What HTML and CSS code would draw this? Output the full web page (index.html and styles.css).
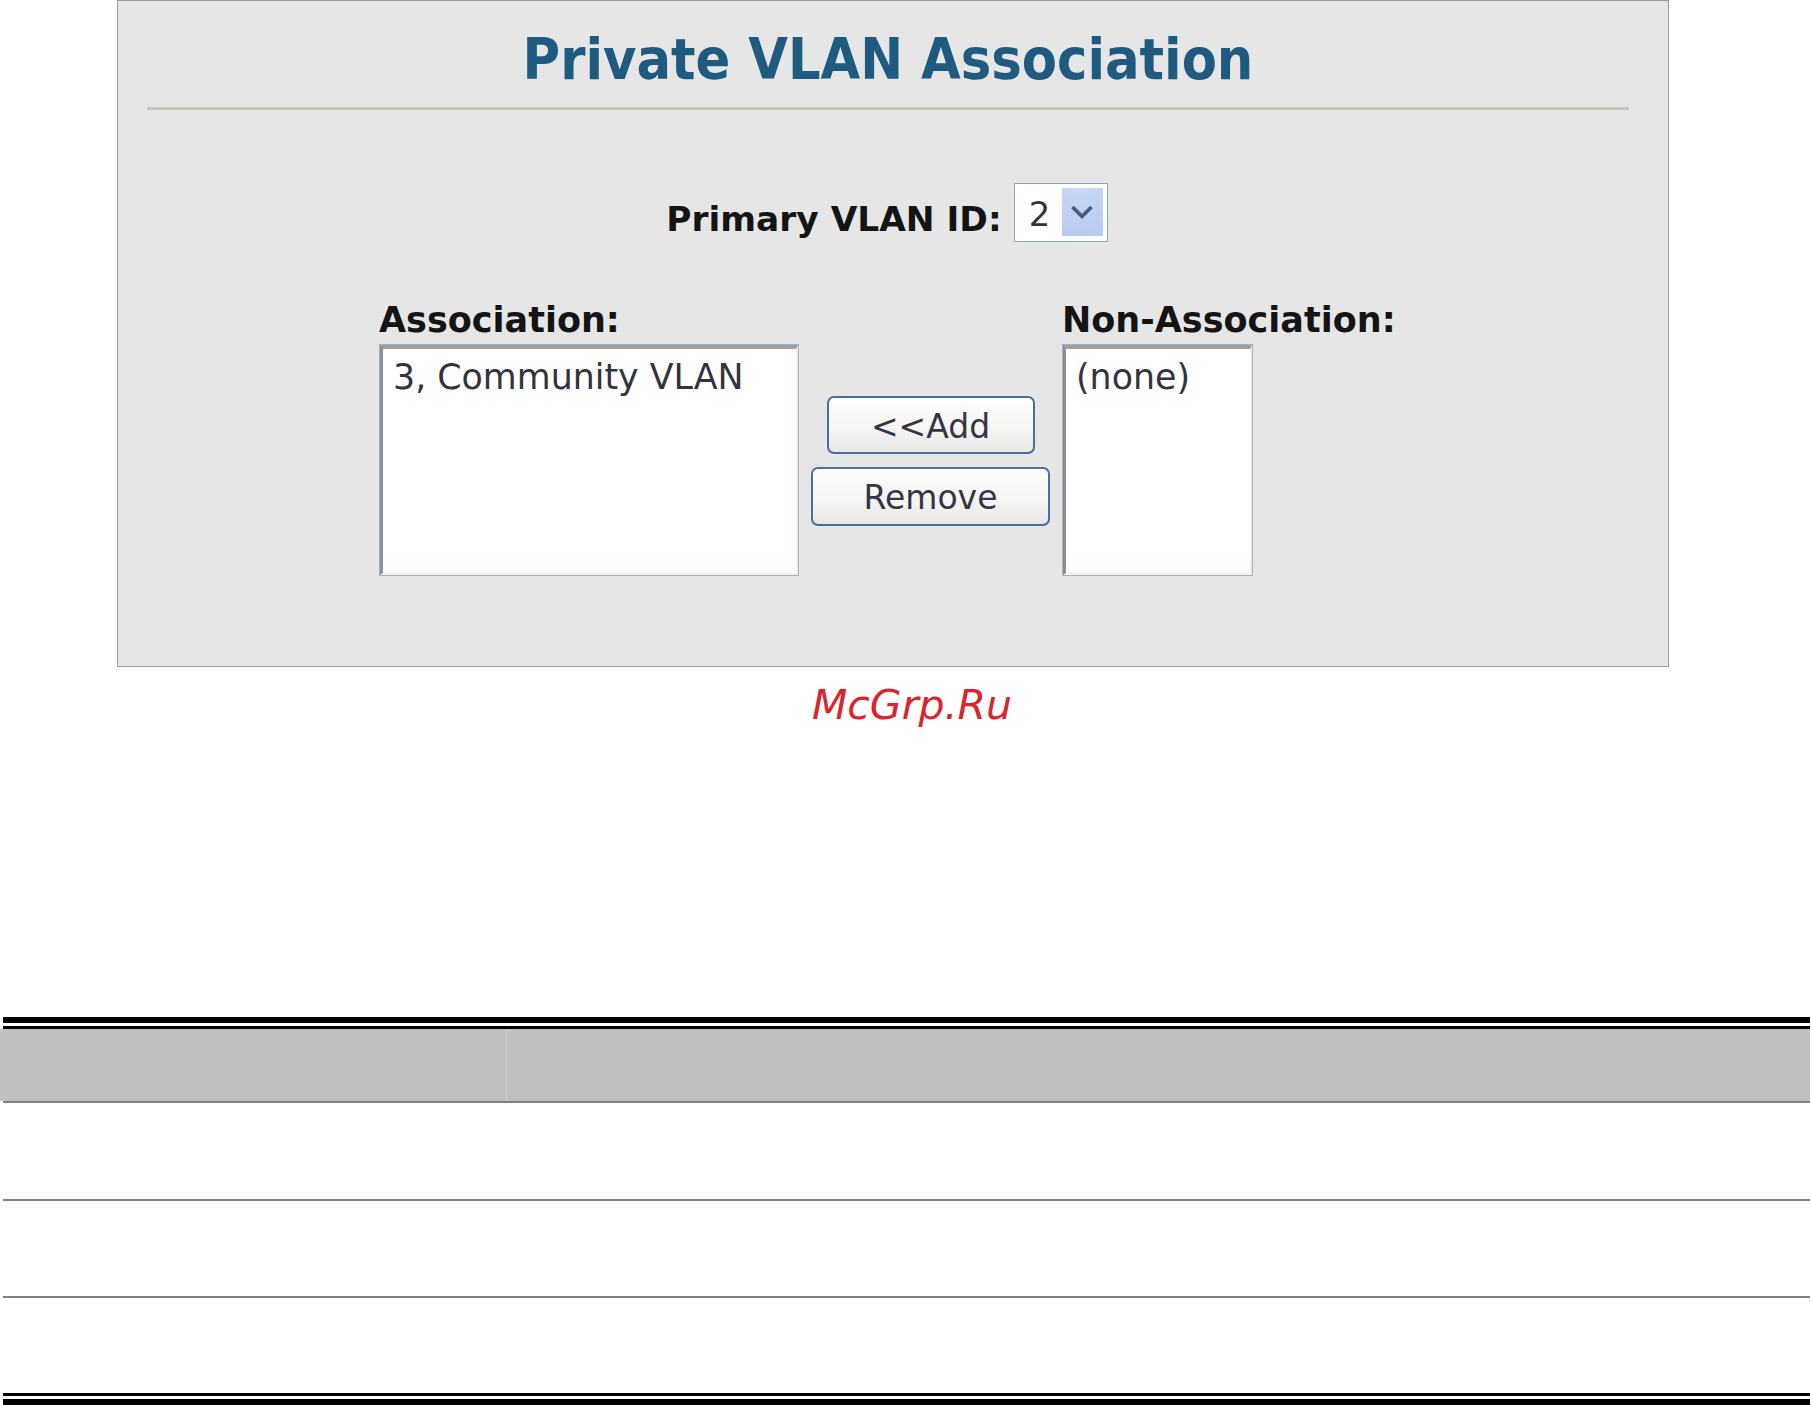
FILE: index.html
```html
<!DOCTYPE html>
<html>
<head>
<meta charset="utf-8">
<title>Private VLAN Association</title>
<link rel="stylesheet" href="styles.css">
</head>
<body>
<div class="panel">
  <h1 class="title">Private VLAN Association</h1>
  <div class="rule"></div>
  <div class="primary-row">
    <span class="label">Primary VLAN ID:</span>
    <div class="select">
      <span class="select-value">2</span>
      <span class="select-btn">
        <svg width="24" height="16" viewBox="0 0 24 16"><path d="M2.5 3 L12 12.5 L21.5 3" fill="none" stroke="#4a5a78" stroke-width="3.6"/></svg>
      </span>
    </div>
  </div>
  <div class="lists-row">
    <div class="col col-assoc">
      <div class="label">Association:</div>
      <div class="listbox"><div class="listbox-inner">3, Community VLAN</div></div>
    </div>
    <div class="btn-col">
      <div class="btn btn-add">&lt;&lt;Add</div>
      <div class="btn btn-remove">Remove</div>
    </div>
    <div class="col col-non">
      <div class="label">Non-Association:</div>
      <div class="listbox"><div class="listbox-inner">(none)</div></div>
    </div>
  </div>
</div>
<div class="watermark">McGrp.Ru</div>
<div class="table">
  <div class="thick-line"></div>
  <div class="thin-black"></div>
  <div class="thead">
    <div class="th th-first"></div>
    <div class="th th-second"></div>
  </div>
  <div class="row"></div>
  <div class="row"></div>
  <div class="row row-last"></div>
  <div class="thin-black bottom-thin"></div>
  <div class="thick-line bottom-thick"></div>
</div>
</body>
</html>
```

FILE: styles.css
```css
html, body {
  margin: 0;
  padding: 0;
  background: #ffffff;
}
body {
  font-family: "DejaVu Sans", Verdana, sans-serif;
  color: #333333;
  width: 1812px;
  height: 1405px;
  overflow: hidden;
}
.panel {
  box-sizing: border-box;
  margin-left: 117px;
  width: 1552px;
  height: 667px;
  background: #e6e6e6;
  border: 1px solid #9a9a9a;
  display: flex;
  flex-direction: column;
}
.title {
  margin: 25px 0 0 0;
  padding-right: 10px;
  font-family: "DejaVu Sans Condensed", "DejaVu Sans", sans-serif;
  font-stretch: condensed;
  font-weight: bold;
  font-size: 57px;
  line-height: 66px;
  height: 66px;
  text-align: center;
  color: #1e5b7e;
}
.rule {
  margin: 15px 39px 0 29px;
  height: 3px;
  background: #c8c7b3;
}
.primary-row {
  margin-top: 73px;
  height: 59px;
  display: flex;
  justify-content: center;
  align-items: flex-start;
  padding-right: 12px;
}
.label {
  font-weight: bold;
  font-size: 34px;
  line-height: 40px;
  color: #141414;
  white-space: nowrap;
}
.primary-row .label {
  margin-top: 16px;
  margin-right: 12px;
  font-size: 34.4px;
}
.select {
  box-sizing: border-box;
  width: 94px;
  height: 59px;
  border: 1px solid #93a4b8;
  background: #ffffff;
  display: flex;
  align-items: flex-start;
  padding: 4px 4px 0 0;
}
.select-value {
  font-size: 34px;
  line-height: 40px;
  margin-top: 6px;
  padding-left: 14px;
  width: 34px;
  color: #333;
}
.select-btn {
  width: 41px;
  height: 48px;
  margin-left: auto;
  background: linear-gradient(#c6d6f6, #b8cbf0);
  display: flex;
  align-items: center;
  justify-content: center;
}
.lists-row {
  margin-top: 58px;
  margin-left: 261px;
  display: flex;
  align-items: flex-start;
}
.col .label {
  margin-bottom: 4px;
  font-size: 35px;
}
.col-assoc {
  width: 420px;
}
.col-non {
  width: 191px;
  margin-left: 12px;
}
.listbox {
  box-sizing: border-box;
  height: 232px;
  border: 1px solid #9db3cd;
  background: #ffffff;
}
.listbox-inner {
  box-sizing: border-box;
  height: 100%;
  border-style: solid;
  border-width: 4px 2px 2px 3px;
  border-color: #a19f99 #f3efe2 #f3efe2 #8f8f8f;
  padding: 8px 0 0 10px;
  font-size: 34.8px;
  line-height: 40px;
  color: #333340;
  white-space: nowrap;
}
.btn-col {
  width: 239px;
  margin-left: 12px;
  margin-top: 96px;
  display: flex;
  flex-direction: column;
  align-items: center;
  gap: 13px;
}
.btn {
  box-sizing: border-box;
  border: 2px solid #47709a;
  border-radius: 7px;
  background: linear-gradient(#ffffff, #f4f4f2 60%, #e6e6e4);
  font-size: 33px;
  line-height: 40px;
  color: #353545;
  display: flex;
  align-items: center;
  justify-content: center;
  padding-top: 3px;
}
.btn-add {
  width: 208px;
  height: 58px;
}
.btn-remove {
  width: 239px;
  height: 59px;
}
.watermark {
  margin-top: 14px;
  padding-left: 12px;
  text-align: center;
  font-style: italic;
  font-size: 41px;
  line-height: 48px;
  color: #d8262c;
}
.table {
  margin-top: 288px;
  width: 1810px;
}
.thick-line {
  margin-left: 3px;
  height: 6px;
  background: #000;
}
.thin-black {
  margin-left: 3px;
  margin-top: 3px;
  height: 3px;
  background: #000;
}
.thead {
  display: grid;
  grid-template-columns: 506px 1fr;
  height: 72px;
  background: #c0c0c0;
}
.th-second {
  border-left: 1px solid #d2d2d2;
}
.row {
  margin-left: 3px;
  border-top: 2px solid #808080;
  height: 96px;
}
.row + .row {
  height: 95px;
}
.bottom-thin {
  margin-top: 0;
}
.bottom-thick {
  margin-top: 3px;
}
```
